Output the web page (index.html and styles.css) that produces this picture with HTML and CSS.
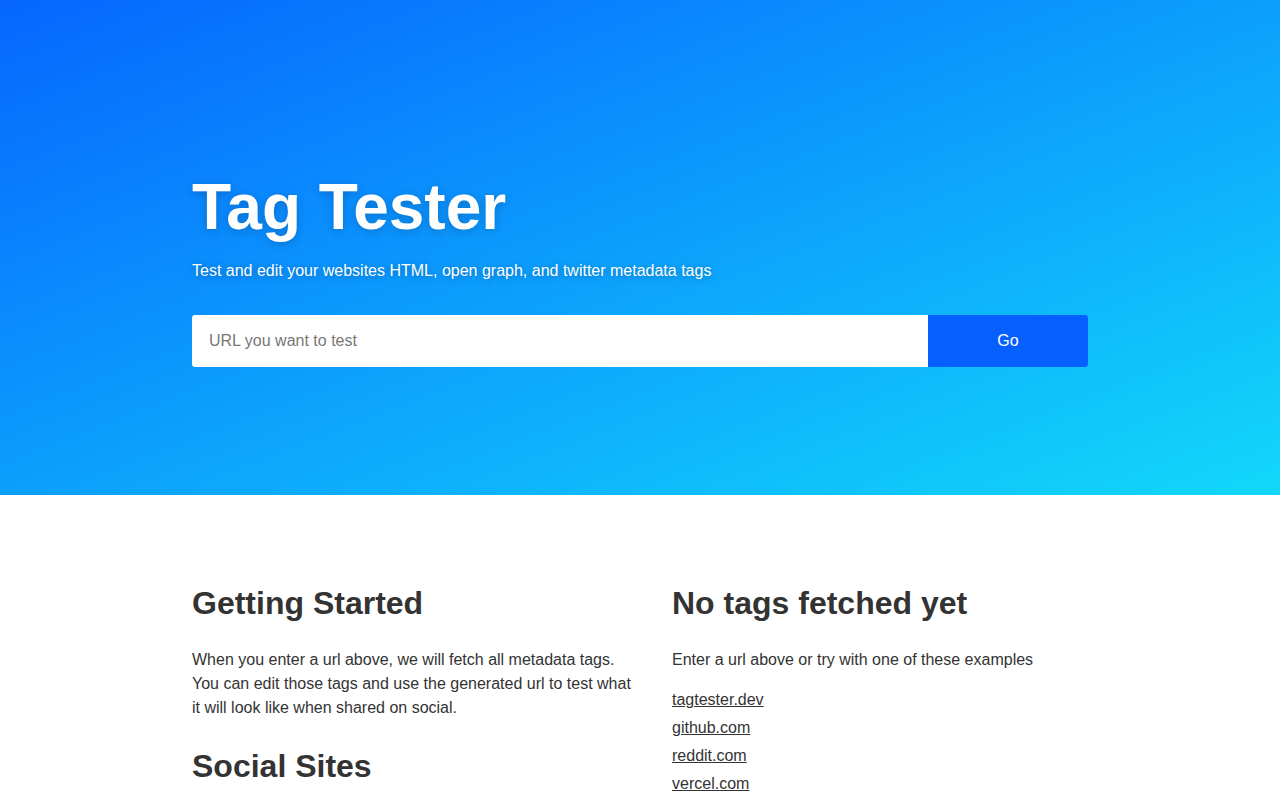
FILE: index.html
```html
<!DOCTYPE html>
<html lang="en">
<head>
  <meta charset="UTF-8">
  <meta name="viewport" content="width=device-width, initial-scale=1.0">
  <title>Tag Tester</title>
  <link rel="stylesheet" href="styles.css">
</head>
<body>
  <header class="hero">
    <div class="container">
      <h1 class="hero-title">Tag Tester</h1>
      <p class="hero-sub">Test and edit your websites HTML, open graph, and twitter metadata tags</p>
      <form class="url-form" onsubmit="return false">
        <input type="text" class="url-input" placeholder="URL you want to test">
        <button type="submit" class="url-go">Go</button>
      </form>
    </div>
  </header>
  <main class="container content">
    <section class="col col-left">
      <h2>Getting Started</h2>
      <p>When you enter a url above, we will fetch all metadata tags. You can edit those tags and use the generated url to test what it will look like when shared on social.</p>
      <h2>Social Sites</h2>
    </section>
    <section class="col">
      <h2>No tags fetched yet</h2>
      <p>Enter a url above or try with one of these examples</p>
      <ul class="examples">
        <li><a href="#">tagtester.dev</a></li>
        <li><a href="#">github.com</a></li>
        <li><a href="#">reddit.com</a></li>
        <li><a href="#">vercel.com</a></li>
      </ul>
    </section>
  </main>
</body>
</html>
```

FILE: styles.css
```css
* { box-sizing: border-box; }
body {
  margin: 0;
  font-family: "Liberation Sans", Arial, sans-serif;
  color: #333;
  background: #fff;
}
.container {
  width: 896px;
  margin: 0 auto;
}
.hero {
  height: 495px;
  background: linear-gradient(to bottom right, #0666ff, #12d8fa);
  color: #fff;
  padding-top: 168px;
}
.hero-title {
  margin: 0;
  font-size: 64px;
  line-height: 78px;
  font-weight: 700;
  text-shadow: 0 2px 8px rgba(0,0,0,0.2);
}
.hero-sub {
  margin: 15px 0 0;
  font-size: 16px;
  line-height: 20px;
  text-shadow: 0 1px 6px rgba(0,0,0,0.3);
}
.url-form {
  display: flex;
  margin-top: 34px;
  height: 52px;
  border-radius: 3px;
  overflow: hidden;
}
.url-input {
  flex: 1;
  border: none;
  padding: 0 17px;
  font: inherit;
  font-size: 16px;
  color: #333;
  outline: none;
}
.url-input::placeholder { color: #777; }
.url-go {
  width: 160px;
  border: none;
  background: #0560ff;
  color: #fff;
  font: inherit;
  font-size: 16px;
  cursor: pointer;
}
.content {
  display: grid;
  grid-template-columns: 448px 1fr;
  gap: 32px;
  padding-top: 86px;
}
.col h2 {
  margin: 0 0 23px;
  font-size: 32px;
  line-height: 44px;
}
.col p {
  margin: 0 0 24px;
  font-size: 16px;
  line-height: 24px;
}
.examples {
  list-style: none;
  margin: -10px 0 0;
  padding: 0;
}
.examples li {
  font-size: 16px;
  line-height: 28px;
}
.examples a { color: #333; }
```
